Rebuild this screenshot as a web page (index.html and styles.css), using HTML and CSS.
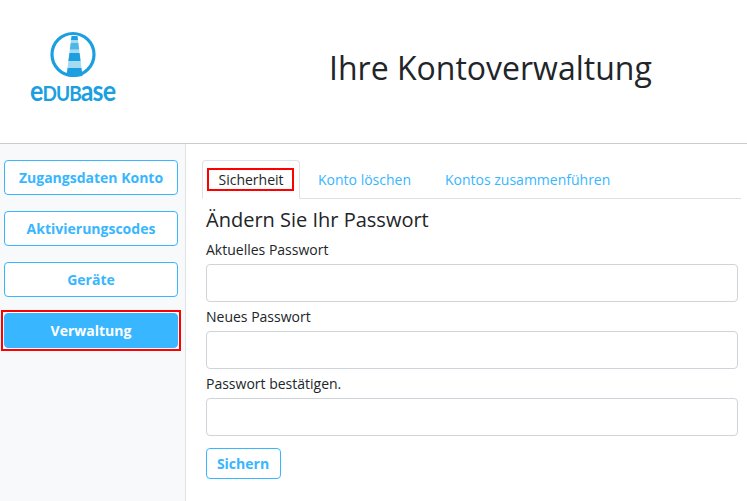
FILE: index.html
```html
<!DOCTYPE html>
<html lang="de">
<head>
<meta charset="utf-8">
<title>Ihre Kontoverwaltung</title>
<link rel="stylesheet" href="styles.css">
</head>
<body>
<header class="header">
  <div class="logo">
    <svg class="logo-mark" width="46" height="46" viewBox="0 0 46 46" aria-hidden="true">
      <circle cx="23" cy="23.5" r="21" fill="none" stroke="#1b9fe0" stroke-width="3.2"/>
      <path d="M21.500 5h6l.5 4h-7z" fill="#1b9fe0"/>
      <path d="M21 9h7l.4 3h-7.800z" fill="#a5daf3"/>
      <path d="M20.600 12h7.800l.8 6.700h-9.400z" fill="#4fb6e8"/>
      <path d="M19.800 18.700h9.400l.4 3.300h-10.200z" fill="#a5daf3"/>
      <path d="M19.400 22h10.200l1.100 8.300h-12.400z" fill="#1b9fe0"/>
      <path d="M18.300 30.300h12.400l.8 6.700h-14z" fill="#a5daf3"/>
      <path d="M17.500 37h14l1 8q-8 1.500-16 0z" fill="#1b9fe0"/>
    </svg>
    <div class="logo-text"><span class="lc">e</span><span class="uc">DUB</span><span class="lc">ase</span></div>
  </div>
  <h1 class="title">Ihre Kontoverwaltung</h1>
</header>
<div class="layout">
  <nav class="sidebar">
    <a class="side-btn">Zugangsdaten Konto</a>
    <a class="side-btn">Aktivierungscodes</a>
    <a class="side-btn">Geräte</a>
    <div class="frame"><a class="side-btn active">Verwaltung</a></div>
  </nav>
  <main class="content">
    <div class="tabs">
      <div class="tab current"><span class="mark">Sicherheit</span></div>
      <a class="tab">Konto löschen</a>
      <a class="tab">Kontos zusammenführen</a>
    </div>
    <form class="form">
      <h2 class="form-title">Ändern Sie Ihr Passwort</h2>
      <label class="label">Aktuelles Passwort</label>
      <input class="input" type="password">
      <label class="label">Neues Passwort</label>
      <input class="input" type="password">
      <label class="label">Passwort bestätigen.</label>
      <input class="input" type="password">
      <button class="save" type="button">Sichern</button>
    </form>
  </main>
</div>
</body>
</html>
```
FILE: styles.css
```css
* { box-sizing: border-box; }
html, body { margin: 0; height: 100%; overflow: hidden; }
body {
  font-family: "Open Sans", sans-serif;
  font-size: 14px;
  color: #212529;
  background: #fff;
  display: flex;
  flex-direction: column;
}
.header {
  height: 144px;
  flex: none;
  border-bottom: 1px solid #ccc;
  display: flex;
  align-items: flex-start;
}
.logo {
  width: 144px;
  padding: 31px 0 0 1px;
  display: flex;
  flex-direction: column;
  align-items: center;
}
.logo-mark { display: block; }
.logo-text {
  font-family: "Lato", sans-serif;
  font-weight: 700;
  color: #1b9fe0;
  line-height: 26px;
  white-space: nowrap;
  transform: scaleY(1.12);
}
.lc { font-size: 25px; letter-spacing: -0.9px; }
.uc { font-size: 19px; letter-spacing: -0.9px; }
.title {
  margin: 46px 0 0 185px;
  font-size: 32px;
  font-weight: 400;
  line-height: 44px;
  white-space: nowrap;
}
.layout { flex: 1; display: flex; min-height: 0; }
.sidebar {
  width: 186px;
  flex: none;
  background: #f8f9fa;
  border-right: 1px solid #dee2e6;
  padding: 16px 7px 0 4px;
  display: flex;
  flex-direction: column;
  gap: 16px;
}
.side-btn {
  height: 35px;
  display: flex;
  align-items: center;
  justify-content: center;
  background: #fff;
  border: 1px solid #38b6ff;
  border-radius: 4px;
  color: #38b6ff;
  font-weight: 700;
  font-size: 14px;
}
.frame {
  margin: -3px;
  padding: 1px;
  border: 2px solid #f00;
  background: #fff;
}
.side-btn.active {
  background: #38b6ff;
  color: #fff;
}
.content { flex: 1; padding: 16px 6px 0 16px; min-width: 0; }
.tabs {
  height: 39px;
  display: flex;
  border-bottom: 1px solid #dee2e6;
}
.tab {
  height: 39px;
  display: flex;
  align-items: center;
  padding: 0 15px 0 17px;
  color: #38b6ff;
  border: 1px solid transparent;
  font-size: 14px;
  white-space: nowrap;
}
.tab.current {
  padding: 0 5px 0 4px;
  color: #212529;
  background: #fff;
  border-color: #dee2e6 #dee2e6 #fff;
  border-radius: 4px 4px 0 0;
}
.mark {
  width: 87px;
  height: 23px;
  padding-left: 1px;
  border: 2px solid #f00;
  display: flex;
  align-items: center;
  justify-content: center;
}
.form { padding: 0 3px 0 4px; display: flex; flex-direction: column; align-items: flex-start; }
.form-title {
  margin: 7px 0 0;
  font-size: 20px;
  font-weight: 400;
  line-height: 27px;
}
.label { display: block; line-height: 19px; margin-top: 5px; margin-bottom: 5px; }
.form-title + .label { margin-top: 7px; }
.input {
  display: block;
  width: 100%;
  height: 38px;
  border: 1px solid #ced4da;
  border-radius: 4px;
  background: #fff;
  margin: 0;
}
.save {
  margin-top: 12px;
  height: 31px;
  width: 75px;
  padding: 0 1px 0 0;
  background: #fff;
  border: 1px solid #38b6ff;
  border-radius: 4px;
  color: #38b6ff;
  font-family: inherit;
  font-weight: 700;
  font-size: 14px;
}
```
